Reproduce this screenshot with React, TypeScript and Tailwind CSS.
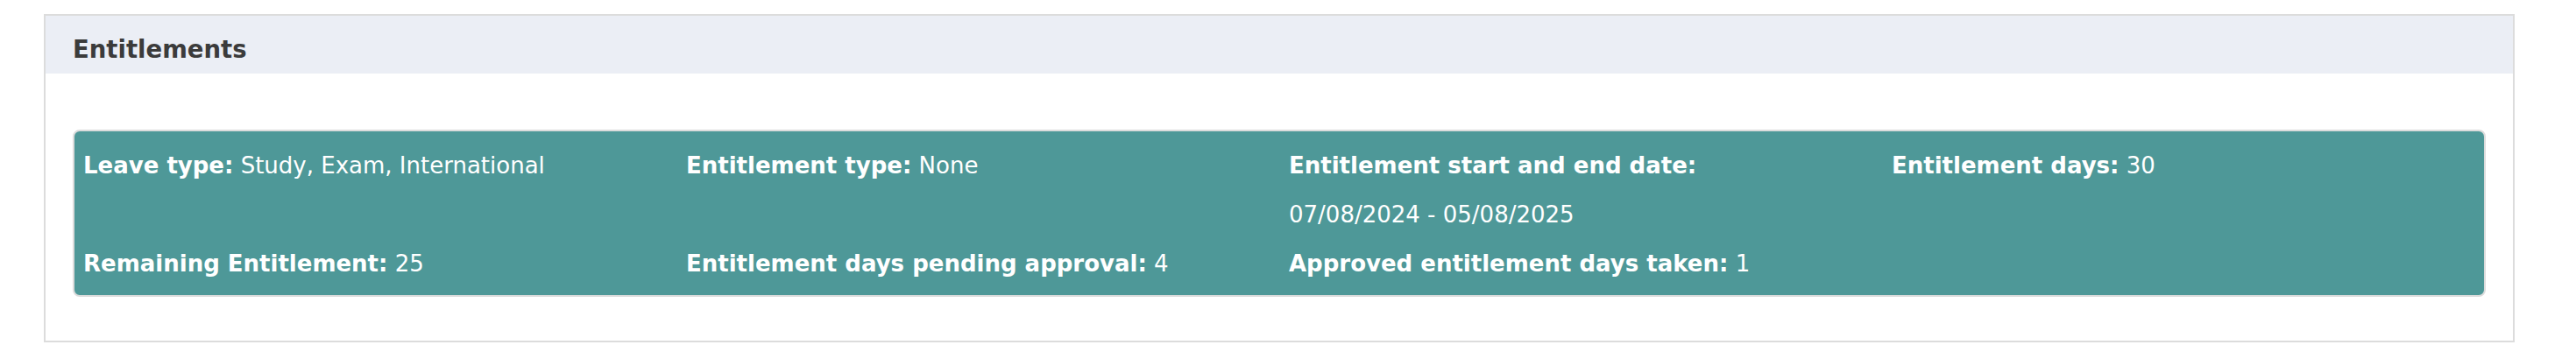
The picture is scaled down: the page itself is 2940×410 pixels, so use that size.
const items = [
  { label: "Leave type:", value: "Study, Exam, International" },
  { label: "Entitlement type:", value: "None" },
  { label: "Entitlement start and end date:", value: "07/08/2024 - 05/08/2025" },
  { label: "Entitlement days:", value: "30" },
  { label: "Remaining Entitlement:", value: "25" },
  { label: "Entitlement days pending approval:", value: "4" },
  { label: "Approved entitlement days taken:", value: "1" },
];

export default function App() {
  return (
    <div className="min-h-[410px] bg-white pt-[16px] pl-[50px] font-['DejaVu_Sans',Verdana,sans-serif]">
      <div className="w-[2820px] border-2 border-[#dcdcdc]">
        <div className="h-[66px] bg-[#ebeef5] pl-[31px] pt-[22px]">
          <h2 className="text-[27.5px] font-bold leading-[32px] text-[#3b3b3b]">Entitlements</h2>
        </div>
        <div className="px-[31px] pt-[64px] pb-[50px]">
          <div className="rounded-lg border-2 border-[#dcdcdc] bg-[#4e9898] px-[10px] pt-[11px] pb-[8px]">
            <div className="grid grid-cols-4 gap-x-[22px] text-[26px] leading-[56px] text-white">
              {items.map((item) => (
                <p key={item.label}>
                  <span className="font-bold">{item.label}</span>{" "}
                  <span className="whitespace-nowrap">{item.value}</span>
                </p>
              ))}
            </div>
          </div>
        </div>
      </div>
    </div>
  );
}
